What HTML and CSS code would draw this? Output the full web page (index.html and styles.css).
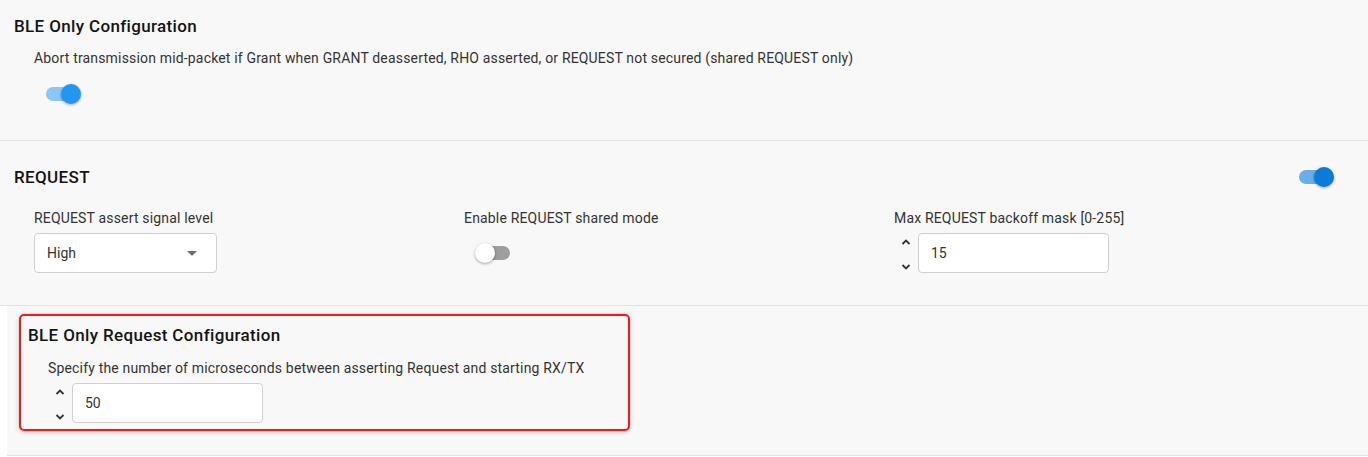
FILE: index.html
```html
<!DOCTYPE html>
<html lang="en">
<head>
  <meta charset="UTF-8" />
  <title>Coexistence Configuration</title>
  <link rel="stylesheet" href="styles.css">
</head>
<body>
  <div class="section">
    <h2 class="title first">BLE Only Configuration</h2>
    <div class="field">
      <label>Abort transmission mid-packet if Grant when GRANT deasserted, RHO asserted, or REQUEST not secured (shared REQUEST only)</label>
      <div class="control">
        <span class="switch on"><span class="track"></span><span class="thumb"></span></span>
      </div>
    </div>
  </div>

  <div class="section request">
    <div class="title-row">
      <h2 class="title">REQUEST</h2>
      <span class="switch on dark"><span class="track"></span><span class="thumb"></span></span>
    </div>
    <div class="columns">
      <div class="field">
        <label>REQUEST assert signal level</label>
        <div class="select">
          <span>High</span>
          <svg width="10" height="5" viewBox="0 0 10 5"><path d="M0 0h10L5 5z" fill="#6f6f6f"/></svg>
        </div>
      </div>
      <div class="field">
        <label>Enable REQUEST shared mode</label>
        <div class="control">
          <span class="switch"><span class="track"></span><span class="thumb"></span></span>
        </div>
      </div>
      <div class="field">
        <label>Max REQUEST backoff mask [0-255]</label>
        <div class="number">
          <div class="spin">
            <svg width="10" height="6" viewBox="0 0 10 6"><path d="M1.5 5L5 1.5 8.5 5" fill="none" stroke="#333" stroke-width="1.8"/></svg>
            <svg width="10" height="6" viewBox="0 0 10 6"><path d="M1.5 1L5 4.5 8.5 1" fill="none" stroke="#333" stroke-width="1.8"/></svg>
          </div>
          <div class="input">15</div>
        </div>
      </div>
    </div>
  </div>

  <div class="nested">
    <div class="section sub">
      <div class="highlight">
        <h2 class="title">BLE Only Request Configuration</h2>
        <div class="field">
          <label>Specify the number of microseconds between asserting Request and starting RX/TX</label>
          <div class="number">
            <div class="spin">
              <svg width="10" height="6" viewBox="0 0 10 6"><path d="M1.5 5L5 1.5 8.5 5" fill="none" stroke="#333" stroke-width="1.8"/></svg>
              <svg width="10" height="6" viewBox="0 0 10 6"><path d="M1.5 1L5 4.5 8.5 1" fill="none" stroke="#333" stroke-width="1.8"/></svg>
            </div>
            <div class="input">50</div>
          </div>
        </div>
      </div>
    </div>
  </div>
</body>
</html>
```

FILE: styles.css
```css
body {
  margin: 0;
  background: #fff;
  font-family: Roboto, "Noto Sans", sans-serif;
  color: #333;
}
.section {
  background: #f8f8f8;
  border-bottom: 1px solid #e2e2e2;
  padding: 26px 14px 32px;
}
.section:first-child {
  padding: 16px 14px 36px;
}
.title {
  margin: 0;
  font-size: 17px;
  font-weight: 500;
  line-height: 20px;
  letter-spacing: 0.35px;
  color: #141414;
}
.title-row {
  display: flex;
  justify-content: space-between;
  align-items: center;
  padding-right: 20px;
}
.field {
  padding-left: 20px;
  margin-top: 12px;
}
.field label {
  display: block;
  font-size: 14px;
  line-height: 20px;
  letter-spacing: 0.17px;
  color: #333;
}
.field .control {
  margin-top: 16px;
  height: 20px;
  display: flex;
  align-items: center;
  padding-left: 12px;
}
.columns {
  display: grid;
  grid-template-columns: 430px 430px 430px;
  margin-top: 9px;
}
.columns .field {
  margin-top: 12px;
}
.columns .field label {
  margin-bottom: 5px;
}
.columns .control {
  margin-top: 0;
  height: 40px;
}
.switch {
  position: relative;
  display: inline-block;
  width: 35px;
  height: 20px;
}
.switch .track {
  position: absolute;
  left: 0;
  top: 3px;
  width: 34px;
  height: 14px;
  border-radius: 7px;
  background: #9e9e9e;
}
.switch .thumb {
  position: absolute;
  left: -1px;
  top: 0;
  width: 20px;
  height: 20px;
  border-radius: 50%;
  background: #fff;
  box-shadow: 0 1px 3px rgba(0, 0, 0, 0.35);
}
.switch.on .track {
  background: #8cc6f5;
}
.switch.on .thumb {
  left: 15px;
  background: #2196f3;
}
.switch.dark .track {
  background: #6aaee8;
}
.switch.dark .thumb {
  background: #0a7bd6;
}
.select {
  width: 183px;
  height: 40px;
  box-sizing: border-box;
  border: 1px solid #cfcfcf;
  border-radius: 4px;
  background: #fff;
  display: flex;
  align-items: center;
  justify-content: space-between;
  padding: 0 19px 0 12px;
  font-size: 14px;
  color: #333;
}
.number {
  display: flex;
  align-items: center;
}
.spin {
  width: 24px;
  height: 40px;
  display: flex;
  flex-direction: column;
  justify-content: space-between;
  align-items: flex-start;
  padding: 6px 0 3px 7px;
  box-sizing: border-box;
}
.input {
  width: 191px;
  height: 40px;
  box-sizing: border-box;
  border: 1px solid #cfcfcf;
  border-radius: 4px;
  background: #fff;
  display: flex;
  align-items: center;
  padding-left: 12px;
  font-size: 14px;
  color: #333;
}
.nested {
  padding-left: 7px;
  background: #fff;
}
.section.sub {
  padding: 8px 12px 24px;
}
.highlight {
  width: 611px;
  box-sizing: border-box;
  border: 2px solid #f01818;
  border-radius: 5px;
  padding: 9px 7px 6px;
  box-shadow: 0 1px 4px rgba(0, 0, 0, 0.25);
}
.highlight .field {
  margin-top: 13px;
}
.highlight .field label {
  margin-bottom: 5px;
}
```
